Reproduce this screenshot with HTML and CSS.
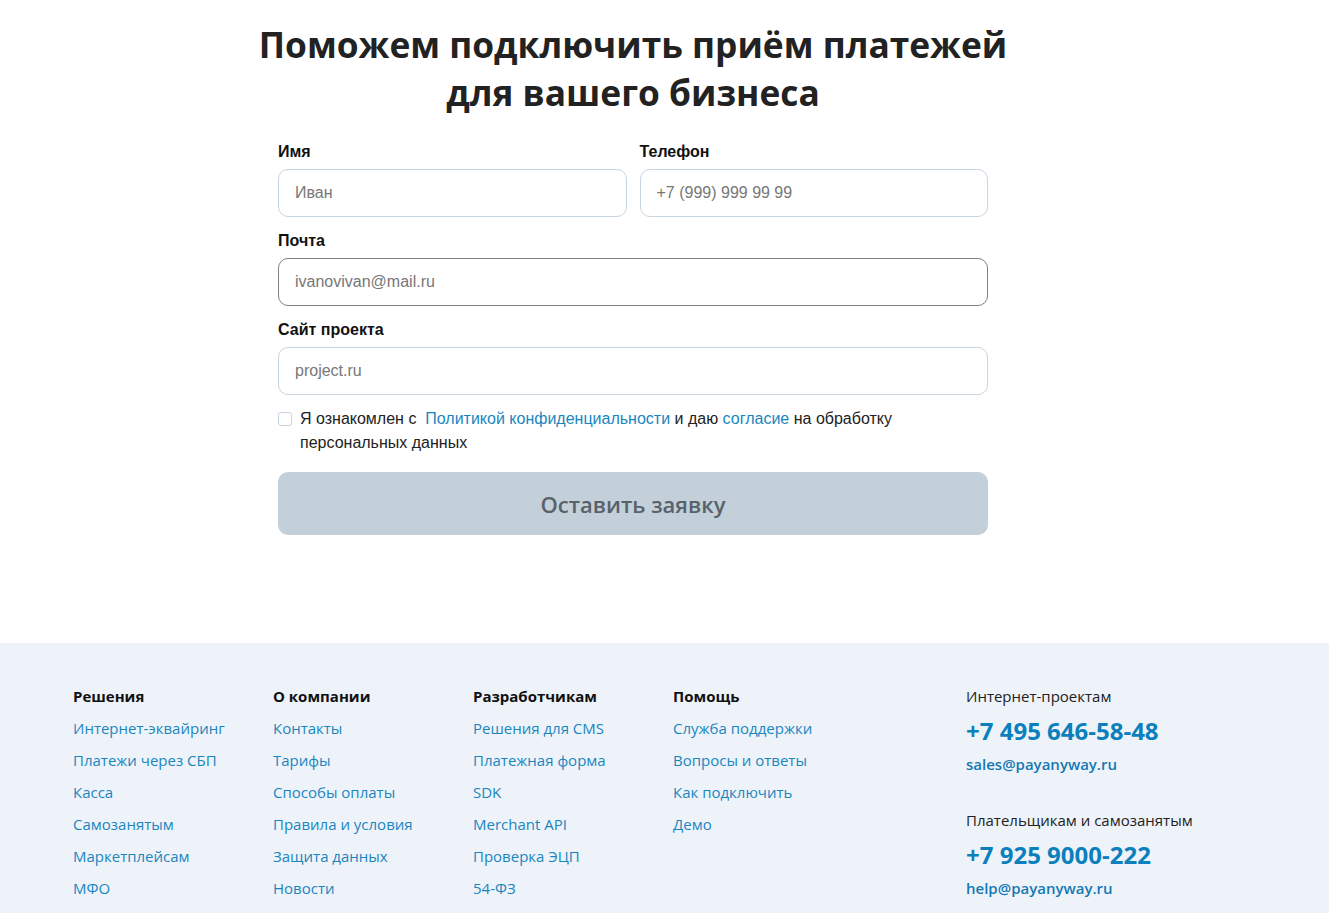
FILE: index.html
```html
<!DOCTYPE html>
<html lang="ru">
<head>
    <meta charset="UTF-8">
    <title>Подключение приёма платежей</title>
    <link rel="stylesheet" href="styles.css">
</head>
<body>
    <section class="request">
        <h1 class="request-title">Поможем подключить приём платежей<br>для вашего бизнеса</h1>
        <form class="request-form">
            <div class="form-row">
                <div class="form-group">
                    <label for="name">Имя</label>
                    <input type="text" id="name" placeholder="Иван">
                </div>
                <div class="form-group">
                    <label for="phone">Телефон</label>
                    <input type="text" id="phone" placeholder="+7 (999) 999 99 99">
                </div>
            </div>
            <div class="form-group">
                <label for="email">Почта</label>
                <input type="text" id="email" class="active" placeholder="ivanovivan@mail.ru">
            </div>
            <div class="form-group">
                <label for="site">Сайт проекта</label>
                <input type="text" id="site" placeholder="project.ru">
            </div>
            <label class="agree">
                <input type="checkbox">
                <span>Я ознакомлен с &nbsp;<a href="#">Политикой конфиденциальности</a> и даю <a href="#">согласие</a> на обработку персональных данных</span>
            </label>
            <button type="button" class="submit">Оставить заявку</button>
        </form>
    </section>

    <footer class="footer">
        <div class="footer-inner">
            <div class="footer-col">
                <div class="footer-head">Решения</div>
                <a href="#">Интернет-эквайринг</a>
                <a href="#">Платежи через СБП</a>
                <a href="#">Касса</a>
                <a href="#">Самозанятым</a>
                <a href="#">Маркетплейсам</a>
                <a href="#">МФО</a>
            </div>
            <div class="footer-col">
                <div class="footer-head">О компании</div>
                <a href="#">Контакты</a>
                <a href="#">Тарифы</a>
                <a href="#">Способы оплаты</a>
                <a href="#">Правила и условия</a>
                <a href="#">Защита данных</a>
                <a href="#">Новости</a>
            </div>
            <div class="footer-col">
                <div class="footer-head">Разработчикам</div>
                <a href="#">Решения для CMS</a>
                <a href="#">Платежная форма</a>
                <a href="#">SDK</a>
                <a href="#">Merchant API</a>
                <a href="#">Проверка ЭЦП</a>
                <a href="#">54-ФЗ</a>
            </div>
            <div class="footer-col">
                <div class="footer-head">Помощь</div>
                <a href="#">Служба поддержки</a>
                <a href="#">Вопросы и ответы</a>
                <a href="#">Как подключить</a>
                <a href="#">Демо</a>
            </div>
            <div class="footer-contacts">
                <div class="contact">
                    <div class="contact-title">Интернет-проектам</div>
                    <a class="contact-phone" href="#">+7 495 646-58-48</a>
                    <a class="contact-mail" href="#">sales@payanyway.ru</a>
                </div>
                <div class="contact">
                    <div class="contact-title">Плательщикам и самозанятым</div>
                    <a class="contact-phone" href="#">+7 925 9000-222</a>
                    <a class="contact-mail" href="#">help@payanyway.ru</a>
                </div>
            </div>
        </div>
    </footer>
</body>
</html>
```

FILE: styles.css
```css
body {
    margin: 0;
    font-family: "Open Sans", Arial, sans-serif;
    color: #222;
    background-color: white;
}
a {
    color: #1a86c0;
    text-decoration: none;
}

/* request form */
.request {
    width: 710px;
    margin: 0 0 0 278px;
    padding: 20px 0 108px;
}
.request-title {
    margin: 0 -40px 27px;
    font-size: 35.3px;
    line-height: 48px;
    font-weight: 700;
    text-align: center;
    color: #222;
}
.request-form {
    font-family: "Liberation Sans", Arial, sans-serif;
}
.form-row {
    display: flex;
    gap: 13px;
}
.form-row .form-group {
    flex: 1;
}
.form-group {
    margin-bottom: 15px;
}
.form-group label {
    display: block;
    margin-bottom: 8px;
    font-size: 16px;
    line-height: 18px;
    font-weight: bold;
    color: #111;
}
.form-group input {
    box-sizing: border-box;
    width: 100%;
    height: 48px;
    padding: 0 16px;
    border: 1px solid #c8d5e1;
    border-radius: 10px;
    font-family: inherit;
    font-size: 16px;
    color: #333;
    outline: none;
}
.form-group input::placeholder {
    color: #777;
}
.form-group input.active {
    border-color: #7c8187;
}
/* pulls the consent row a little closer to the last field */
.agree {
    display: flex;
    gap: 8px;
    margin-top: -3px;
    font-size: 16px;
    line-height: 24px;
    color: #222;
}
.agree input {
    flex-shrink: 0;
    width: 14px;
    height: 14px;
    margin: 5px 0 0;
    appearance: none;
    border: 1px solid #c8d5e1;
    border-radius: 3px;
    background: white;
}
.agree span {
    padding-right: 90px;
}
.submit {
    display: block;
    width: 100%;
    height: 63px;
    margin-top: 17px;
    border: none;
    border-radius: 10px;
    background-color: #c3cfd9;
    color: #58626b;
    font-family: "Open Sans", Arial, sans-serif;
    font-size: 22px;
    font-weight: 600;
}

/* footer */
.footer {
    background-color: #eef3fa;
    padding: 42px 0 20px 73px;
}
.footer-inner {
    display: flex;
}
.footer-col {
    display: flex;
    flex-direction: column;
    width: 200px;
    font-size: 15px;
}
.footer-head {
    font-weight: 700;
    color: #111;
    line-height: 22px;
    margin-bottom: 10px;
}
.footer-col a {
    line-height: 22px;
    margin-bottom: 10px;
}
.footer-contacts {
    margin-left: 93px;
    font-size: 15px;
}
.contact {
    display: flex;
    flex-direction: column;
    margin-bottom: 34px;
}
.contact-title {
    line-height: 22px;
    color: #222;
}
.contact-phone {
    margin-top: 9px;
    font-size: 24px;
    line-height: 30px;
    font-weight: 700;
    color: #0c7fbd;
}
.contact-mail {
    margin-top: 7px;
    line-height: 22px;
    font-weight: 600;
    color: #1578b3;
}
```
